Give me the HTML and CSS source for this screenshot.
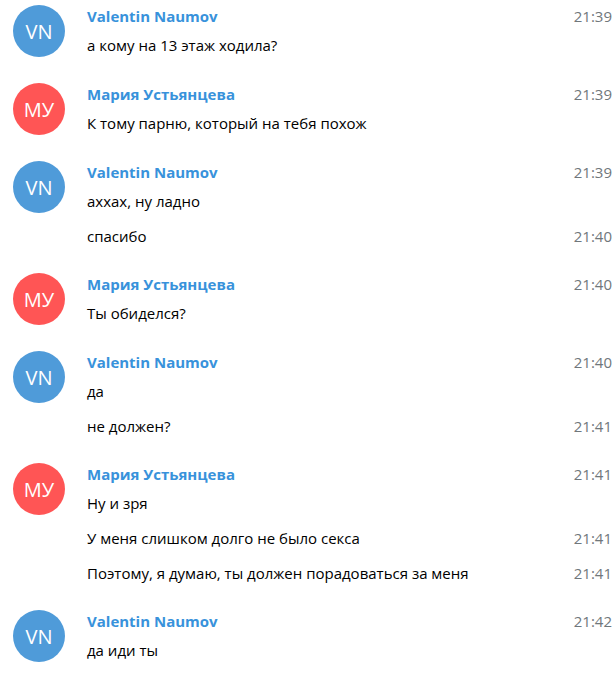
FILE: index.html
```html
<!DOCTYPE html>
<html lang="ru">
<head>
<meta charset="utf-8">
<title>Chat</title>
<link rel="stylesheet" href="styles.css">
</head>
<body>
<main class="chat">
  <article class="group">
    <div class="avatar avatar-blue">VN</div>
    <div class="messages">
      <div class="message"><div class="content"><div class="name">Valentin Naumov</div><p class="text">а кому на 13 этаж ходила?</p></div><time class="time">21:39</time></div>
    </div>
  </article>
  <article class="group">
    <div class="avatar avatar-red">МУ</div>
    <div class="messages">
      <div class="message"><div class="content"><div class="name">Мария Устьянцева</div><p class="text">К тому парню, который на тебя похож</p></div><time class="time">21:39</time></div>
    </div>
  </article>
  <article class="group">
    <div class="avatar avatar-blue">VN</div>
    <div class="messages">
      <div class="message"><div class="content"><div class="name">Valentin Naumov</div><p class="text">аххах, ну ладно</p></div><time class="time">21:39</time></div>
      <div class="message"><p class="text">спасибо</p><time class="time">21:40</time></div>
    </div>
  </article>
  <article class="group">
    <div class="avatar avatar-red">МУ</div>
    <div class="messages">
      <div class="message"><div class="content"><div class="name">Мария Устьянцева</div><p class="text">Ты обиделся?</p></div><time class="time">21:40</time></div>
    </div>
  </article>
  <article class="group">
    <div class="avatar avatar-blue">VN</div>
    <div class="messages">
      <div class="message"><div class="content"><div class="name">Valentin Naumov</div><p class="text">да</p></div><time class="time">21:40</time></div>
      <div class="message"><p class="text">не должен?</p><time class="time">21:41</time></div>
    </div>
  </article>
  <article class="group">
    <div class="avatar avatar-red">МУ</div>
    <div class="messages">
      <div class="message"><div class="content"><div class="name">Мария Устьянцева</div><p class="text">Ну и зря</p></div><time class="time">21:41</time></div>
      <div class="message"><p class="text">У меня слишком долго не было секса</p><time class="time">21:41</time></div>
      <div class="message"><p class="text">Поэтому, я думаю, ты должен порадоваться за меня</p><time class="time">21:41</time></div>
    </div>
  </article>
  <article class="group">
    <div class="avatar avatar-blue">VN</div>
    <div class="messages">
      <div class="message"><div class="content"><div class="name">Valentin Naumov</div><p class="text">да иди ты</p></div><time class="time">21:42</time></div>
    </div>
  </article>
</main>
</body>
</html>
```

FILE: styles.css
```css
body {
  margin: 0;
  background: #fff;
  color: #000;
  font: 15px/21px "Open Sans", sans-serif;
}

.chat {
  display: flex;
  flex-direction: column;
  gap: 26px;
  padding: 5px 3px 5px 13px;
}

.group {
  display: flex;
  align-items: flex-start;
  gap: 22px;
}

.avatar {
  display: flex;
  flex: none;
  align-items: center;
  justify-content: center;
  width: 52px;
  height: 52px;
  border-radius: 50%;
  color: #fff;
  font-size: 20px;
}

.avatar-blue {
  background: #4f9bd9;
}

.avatar-red {
  background: #ff5555;
}

.messages {
  display: flex;
  flex: 1;
  flex-direction: column;
  gap: 14px;
  padding-top: 1px;
}

.message {
  display: flex;
  align-items: flex-start;
  justify-content: space-between;
}

.name {
  margin-bottom: 8px;
  color: #3892db;
  font-weight: 700;
}

.text {
  margin: 0;
}

.time {
  color: #70777b;
}
```
